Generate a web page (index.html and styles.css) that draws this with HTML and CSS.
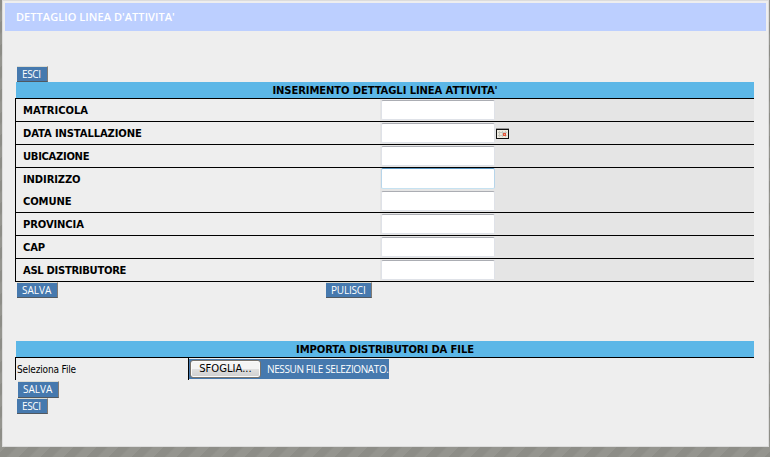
FILE: index.html
```
<!DOCTYPE html>
<html lang="it">
<head>
<meta charset="utf-8">
<title>Dettaglio linea d'attività</title>
<link rel="stylesheet" href="styles.css">
</head>
<body>
<main class="dialog">
  <header class="titlebar"><span class="title-text">DETTAGLIO LINEA D'ATTIVITA'</span></header>
  <div class="content">
    <button class="btn exit">ESCI</button>
    <section class="details">
      <h2 class="bar">INSERIMENTO DETTAGLI LINEA ATTIVITA'</h2>
      <div class="rows">
        <div class="row"><label class="wide">MATRICOLA</label><div class="cell"><input type="text"></div></div>
        <div class="row"><label>DATA INSTALLAZIONE</label><div class="cell"><input type="text">
          <svg class="calendar" width="13" height="11" viewBox="0 0 13 11" shape-rendering="crispEdges"><path fill="#eeeadf" d="M0 0h13v11H0z"/><path fill="#999" d="M0 0h13v1H0z"/><path fill="#111" d="M0 1h13v10H0z"/><path fill="#eeeadf" d="M1 2h11v8H1z"/><path fill="#c9c9c0" d="M3 3h1v6H3zM6 3h1v6H6zM9 3h1v6H9zM2 4h9v1H2zM2 7h9v1H2z"/><path fill="#e4573c" d="M7 5h3v3H7z"/><path fill="#f6aa91" d="M8 6h1v1H8z"/></svg></div></div>
        <div class="row"><label class="tight">UBICAZIONE</label><div class="cell"><input type="text"></div></div>
        <div class="row joined"><label>INDIRIZZO</label><div class="cell"><input class="active" type="text"></div></div>
        <div class="row"><label>COMUNE</label><div class="cell"><input type="text"></div></div>
        <div class="row"><label>PROVINCIA</label><div class="cell"><input type="text"></div></div>
        <div class="row"><label>CAP</label><div class="cell"><input type="text"></div></div>
        <div class="row"><label class="tight">ASL DISTRIBUTORE</label><div class="cell"><input type="text"></div></div>
      </div>
    </section>
    <div class="actions"><button class="btn save">SALVA</button><button class="btn clear">PULISCI</button></div>
    <section class="import">
      <h2 class="bar">IMPORTA DISTRIBUTORI DA FILE</h2>
      <div class="file-row">
        <span class="file-label">Seleziona File</span>
        <div class="file-cell"><div class="file-picker"><button class="browse">SFOGLIA...</button><span class="file-status">NESSUN FILE SELEZIONATO.</span></div></div>
      </div>
    </section>
    <div class="bottom-actions"><button class="btn import-save">SALVA</button><button class="btn exit">ESCI</button></div>
  </div>
</main>
</body>
</html>
```
FILE: styles.css
```
* { box-sizing: border-box; }
body {
  margin: 0;
  width: 770px;
  height: 457px;
  overflow: hidden;
  padding: 0 1px 0 2px;
  background: repeating-linear-gradient(135deg, #8d8d87 0 7px, #95958f 9px 16px);
  font-family: "DejaVu Sans", sans-serif;
  font-size: 10px;
}
.dialog {
  height: 447px;
  padding: 2px 2px 0;
  border: 1px solid #dcdcdc;
  background: #eee;
}
.titlebar {
  height: 28px;
  padding-left: 11px;
  background: #bccfff;
  color: #fff;
  font: 600 11px/28px "Open Sans", sans-serif;
}
.title-text { letter-spacing: .06px; }
.content { padding: 35px 12px 0 10px; }
.btn {
  display: block;
  width: 31px;
  height: 16px;
  margin: 0 0 0 2px;
  padding: 0 0 0 5px;
  border: 1px solid;
  border-color: #dcdcd3 #827b74 #505860 #4679ae;
  border-left: 0;
  background: #4679ae;
  color: #fff;
  text-align: left;
  white-space: nowrap;
  font: 10px/13px "Open Sans", sans-serif;
}
.exit { letter-spacing: -.35px; }
.bar {
  height: 16px;
  margin: 0 0 0 1px;
  background: #5cb7e7;
  color: #000;
  text-align: center;
  font-size: 10px;
  font-weight: bold;
  line-height: 17px;
  letter-spacing: -.1px;
}
.rows { border-top: 1px solid #000; border-left: 1px solid #000; }
.row {
  display: flex;
  height: 23px;
  border-bottom: 1px solid #000;
}
.row.joined { height: 22px; border-bottom: 0; }
.row label {
  flex: 0 0 364px;
  padding-left: 7px;
  font-weight: bold;
  line-height: 24px;
  letter-spacing: -.12px;
}
.row label.tight { letter-spacing: -.3px; }
.row label.wide { letter-spacing: 0; }
.cell {
  flex: 1;
  display: flex;
  align-items: flex-start;
  padding: 1px 0 0 1px;
  background: #e5e5e5;
}
.cell input {
  width: 114px;
  height: 20px;
  margin: 0;
  border: 1px solid #dfe2e8;
  border-top-color: #abadb3;
  border-radius: 2px;
  background: #fff;
}
.cell input.active {
  height: 21px;
  margin-top: -1px;
  border-color: #5794bf #b7d5ea #c6e2f1;
}
.calendar { margin: 5px 0 0 1px; }
.actions { display: flex; height: 17px; }
.save { width: 41px; }
.clear { width: 46px; margin-left: 268px; letter-spacing: -.2px; }
.import { margin-top: 42px; }
.file-row {
  display: flex;
  height: 23px;
  border-top: 1px solid #000;
  border-left: 1px solid #000;
}
.file-label {
  width: 172px;
  padding-left: 1px;
  line-height: 24px;
  font-family: "DejaVu Sans Condensed", "DejaVu Sans", sans-serif;
  font-stretch: condensed;
  letter-spacing: -.15px;
}
.file-cell { padding-top: 1px; border-left: 1px solid #000; }
.file-picker {
  display: flex;
  width: 200px;
  height: 20px;
  background: #4679ae;
  color: #fff;
}
.browse {
  flex: 0 0 71px;
  height: 18px;
  margin: 1px 0 0 1px;
  padding: 0;
  border: 1px solid #77736d;
  border-radius: 3px;
  background: linear-gradient(#f4f4f4 0 48%, #dfdfdf 52%, #cfcfcf);
  box-shadow: inset 0 0 0 1px #fafafa;
  color: #000;
  font: 10px/16px "DejaVu Sans", sans-serif;
}
.file-status {
  margin-left: 6px;
  white-space: nowrap;
  font: 10px/20px "Open Sans", sans-serif;
  letter-spacing: -.38px;
}
.bottom-actions { margin-top: 1px; }
.import-save { width: 41px; height: 17px; margin-left: 3px; }
```
